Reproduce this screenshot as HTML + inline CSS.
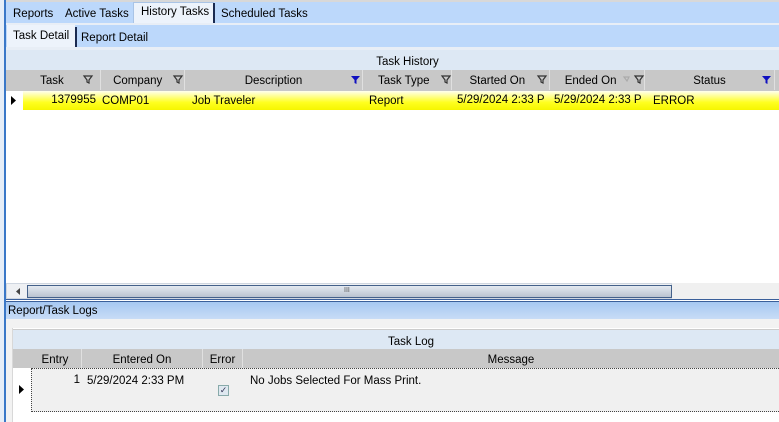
<!DOCTYPE html>
<html><head><style>
*{box-sizing:border-box;margin:0;padding:0}
body{width:779px;height:422px;overflow:hidden;background:#fff;font-family:"Liberation Sans",sans-serif;font-size:11.5px;color:#000;position:relative}
.a{position:absolute}
.hc{position:absolute;top:0;height:20px;line-height:22px;text-align:center;border-right:1px solid #e0e0e0}
</style></head><body>
<div class="a" style="left:0;top:0;width:5px;height:422px;background:#e6eef8"></div>
<div class="a" style="left:4px;top:0;width:2px;height:422px;background:#3a78c8"></div>
<div class="a" style="left:6px;top:0;width:773px;height:24px;background:#bcd8fb"></div>
<div class="a" style="left:6px;top:0;width:773px;height:2px;background:#d8d8d8"></div>
<div class="a" style="left:133px;top:2px;width:81px;height:22px;background:#edf3fb;border:1px solid #a9c4e6;border-bottom:none"></div>
<div class="a" style="left:213px;top:3px;width:2px;height:20px;background:#1a2a50"></div>
<div class="a" style="left:13px;top:8px">Reports</div>
<div class="a" style="left:65px;top:8px">Active Tasks</div>
<div class="a" style="left:141px;top:6px">History Tasks</div>
<div class="a" style="left:221px;top:8px">Scheduled Tasks</div>
<div class="a" style="left:6px;top:23px;width:773px;height:2px;background:#e8eef6"></div>
<div class="a" style="left:6px;top:25px;width:773px;height:22px;background:#bcd8fb"></div>
<div class="a" style="left:7px;top:25px;width:68px;height:22px;background:#edf3fb"></div>
<div class="a" style="left:75px;top:27px;width:2px;height:20px;background:#1a2a50"></div>
<div class="a" style="left:13px;top:30px">Task Detail</div>
<div class="a" style="left:81px;top:32px">Report Detail</div>
<div class="a" style="left:6px;top:47px;width:773px;height:3px;background:#e8eef6"></div>
<div class="a" style="left:6px;top:50px;width:773px;height:20px;background:#dde8f4;text-align:center;line-height:24px;padding-left:30px">Task History</div>
<div class="a" style="left:6px;top:70px;width:773px;height:21px;background:#c8c8c8">
 <div class="hc" style="left:17px;width:78px">Task&nbsp;&nbsp;&nbsp;&nbsp;&nbsp;&nbsp;</div>
 <div class="hc" style="left:95px;width:84px">Company&nbsp;&nbsp;&nbsp;</div>
 <div class="hc" style="left:179px;width:178px">Description</div>
 <div class="hc" style="left:357px;width:89px">Task Type&nbsp;&nbsp;</div>
 <div class="hc" style="left:446px;width:98px">Started On&nbsp;&nbsp;</div>
 <div class="hc" style="left:544px;width:95px">Ended On&nbsp;&nbsp;&nbsp;&nbsp;</div>
 <div class="hc" style="left:639px;width:130px">Status</div>
</div>
<svg class="a" style="left:0;top:71px" width="779" height="21">
<g fill="none" stroke="#333" stroke-width="1.2"><path d="M84 5h8l-3 4v3l-2-1v-2z"/><path d="M174 5h8l-3 4v3l-2-1v-2z"/><path d="M442 5h8l-3 4v3l-2-1v-2z"/><path d="M538 5h8l-3 4v3l-2-1v-2z"/><path d="M635 5h8l-3 4v3l-2-1v-2z"/><path d="M624 6h5l-2 4z" stroke="#aaa"/></g>
<g fill="#1010c0"><path d="M351 5h9l-3.5 4v4l-2-1v-3z"/><path d="M762 5h9l-3.5 4v4l-2-1v-3z"/></g>
</svg>
<div class="a" style="left:6px;top:91px;width:17px;height:19px;background:#fff"></div>
<svg class="a" style="left:11px;top:96px" width="6" height="9"><path d="M0 0l5 4.5L0 9z"/></svg>
<div class="a" style="left:23px;top:91px;width:756px;height:19px;background:linear-gradient(#fffff0,#ffff20 60%,#f6f600)"></div>
<div class="a" style="left:23px;top:94px;width:73px;text-align:right">1379955</div>
<div class="a" style="left:102px;top:95px">COMP01</div>
<div class="a" style="left:192px;top:95px">Job Traveler</div>
<div class="a" style="left:369px;top:95px">Report</div>
<div class="a" style="left:457px;top:94px">5/29/2024 2:33 P</div>
<div class="a" style="left:554px;top:94px">5/29/2024 2:33 P</div>
<div class="a" style="left:653px;top:95px">ERROR</div>
<div class="a" style="left:6px;top:283px;width:666px;height:16px;background:#eef0f3;border:1px solid #cfd6e0"></div>
<div class="a" style="left:27px;top:285px;width:645px;height:13px;background:linear-gradient(#e4e9f0,#b9c3d0);border:1px solid #44618a"></div>
<div class="a" style="left:344px;top:287px;font-size:7px;color:#555">III</div>
<svg class="a" style="left:16px;top:288px" width="5" height="7"><path d="M4 0L0 3.5 4 7z" fill="#444"/></svg>
<div class="a" style="left:672px;top:283px;width:107px;height:16px;background:#f0f0f0"></div>
<div class="a" style="left:6px;top:299px;width:773px;height:1px;background:#3a5f9a"></div>
<div class="a" style="left:6px;top:301px;width:773px;height:1px;background:#3a5f9a"></div>
<div class="a" style="left:6px;top:302px;width:773px;height:17px;background:linear-gradient(#a6c8f2,#c8dcf6)"></div>
<div class="a" style="left:8px;top:305px">Report/Task Logs</div>
<div class="a" style="left:6px;top:319px;width:773px;height:103px;background:#f2f2f2"></div>
<div class="a" style="left:12px;top:328px;width:767px;height:94px;background:#fff;border-left:1px solid #d8d8d8"></div>
<div class="a" style="left:13px;top:329px;width:766px;height:20px;background:#dde8f4;text-align:center;line-height:24px;padding-left:30px;border-top:1px solid #ccc">Task Log</div>
<div class="a" style="left:13px;top:349px;width:766px;height:19px;background:#c8c8c8">
 <div class="hc" style="left:0;width:69px;height:19px">&nbsp;&nbsp;&nbsp;&nbsp;&nbsp;Entry</div>
 <div class="hc" style="left:69px;width:121px;height:19px">Entered On</div>
 <div class="hc" style="left:190px;width:40px;height:19px">Error</div>
 <div class="hc" style="left:230px;width:536px;height:19px;border:none">Message</div>
</div>
<svg class="a" style="left:19px;top:385px" width="6" height="9"><path d="M0 0l5 4.5L0 9z"/></svg>
<div class="a" style="left:31px;top:368px;width:748px;height:44px;background:#f0f0f0;border:1px dotted #444;border-right:none"></div>
<div class="a" style="left:31px;top:374px;width:49px;text-align:right">1</div>
<div class="a" style="left:87px;top:375px">5/29/2024 2:33 PM</div>
<div class="a" style="left:218px;top:385px;width:11px;height:11px;border:1px solid #8aa;background:#dfe8f0;font-size:9px;line-height:9px;text-align:center;color:#335">✓</div>
<div class="a" style="left:250px;top:375px">No Jobs Selected For Mass Print.</div>
</body></html>
